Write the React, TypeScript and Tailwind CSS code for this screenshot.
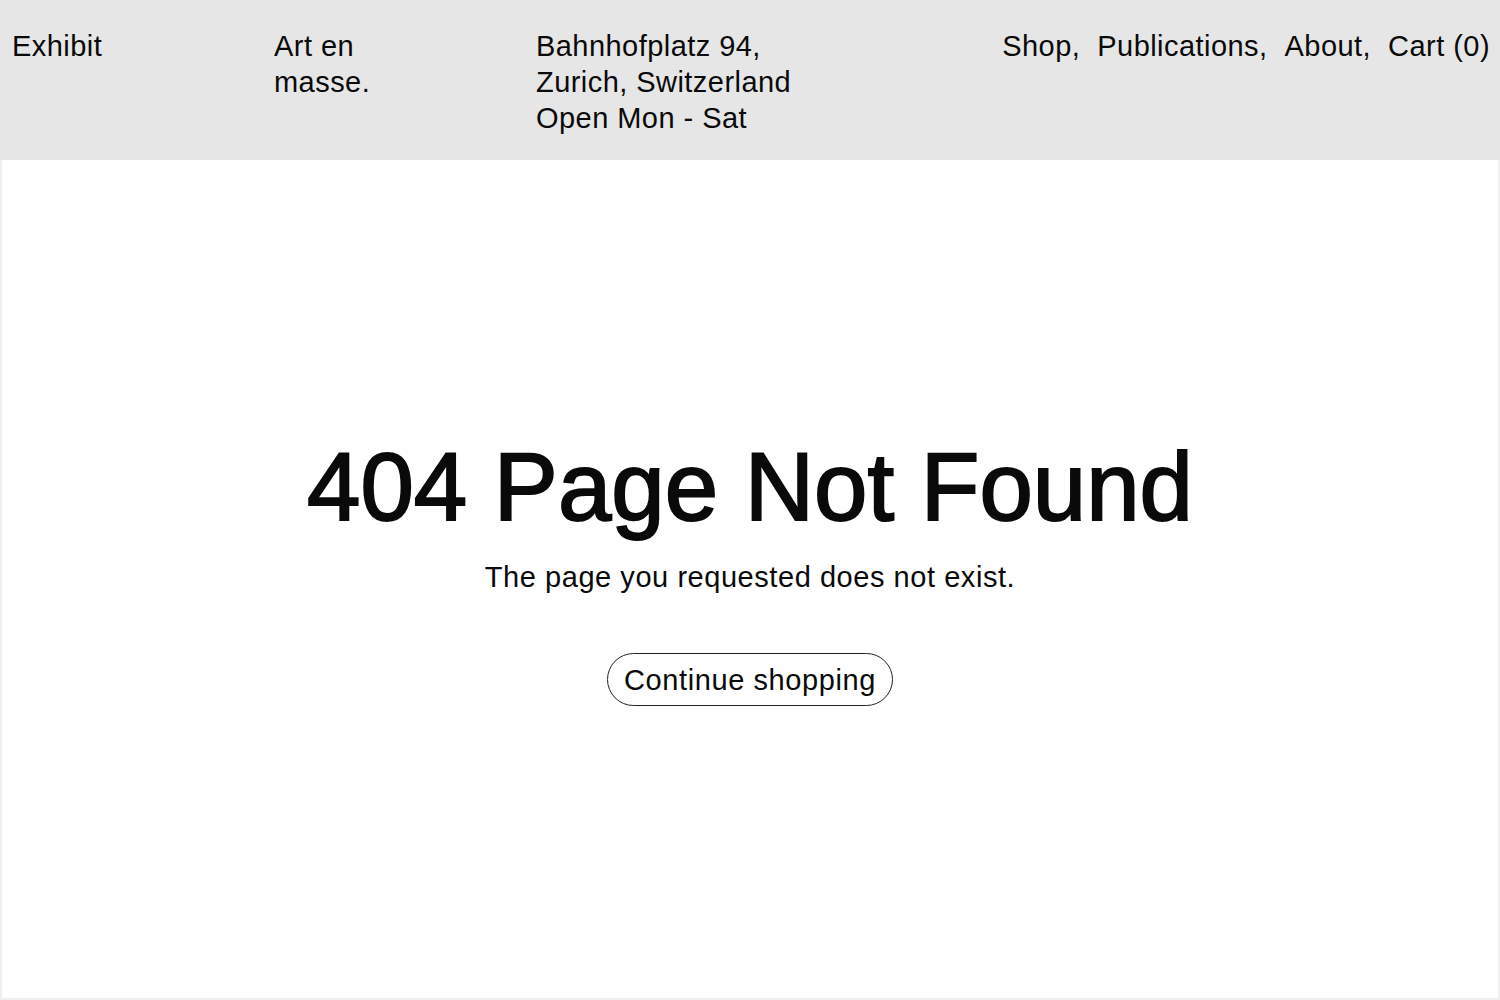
export default function App() {
  const nav = ["Shop,", "Publications,", "About,", "Cart (0)"];

  return (
    <div
      className="min-h-screen flex flex-col bg-white text-[#0a0a0a]"
      style={{ fontFamily: '"Liberation Sans", Arial, sans-serif' }}
    >
      <header className="h-[160px] bg-[#e6e6e6] flex items-start pt-7 pl-3 pr-[10px] text-[29px] leading-[36px] tracking-[0.45px]">
        <div className="w-[262px]">Exhibit</div>
        <div className="w-[262px]">
          Art en
          <br />
          masse.
        </div>
        <div className="w-[300px]">
          Bahnhofplatz 94,
          <br />
          Zurich, Switzerland
          <br />
          Open Mon - Sat
        </div>
        <nav className="ml-auto flex gap-[17px]">
          {nav.map((item) => (
            <a key={item} href="#" className="hover:underline">
              {item}
            </a>
          ))}
        </nav>
      </header>

      <main className="flex-1 h-[840px] border-x-2 border-b-2 border-[#efefef] flex flex-col items-center pt-[279px]">
        <h1 className="text-[96px] leading-[96px] [-webkit-text-stroke:2px_#0a0a0a]">404 Page Not Found</h1>
        <p className="mt-[24px] text-[29px] leading-[36px] tracking-[0.55px]">
          The page you requested does not exist.
        </p>
        <a
          href="#"
          className="mt-[58px] h-[53px] px-4 flex items-center rounded-full border border-[#222] text-[29px] leading-[36px] tracking-[0.6px]"
        >
          Continue shopping
        </a>
      </main>
    </div>
  );
}
